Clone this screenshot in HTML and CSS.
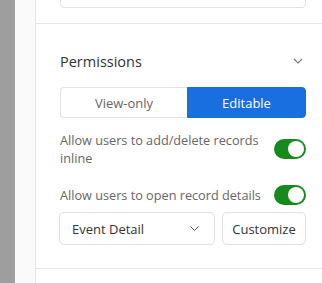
FILE: index.html
```html
<!DOCTYPE html>
<html lang="en">
<head>
    <meta charset="UTF-8">
    <title>Permissions</title>
    <link rel="stylesheet" href="styles.css">
</head>
<body>
<div class="rail"></div>
<div class="gutter"></div>
<div class="panel">
    <div class="section top">
        <div class="field"></div>
    </div>
    <div class="section perms">
        <div class="head">
            <h2>Permissions</h2>
            <svg class="chev" width="10" height="6" viewBox="0 0 10 6"><path d="M1 1l4 4 4-4" fill="none" stroke="#777" stroke-width="1.1"/></svg>
        </div>
        <div class="segment">
            <button type="button" class="seg">View-only</button>
            <button type="button" class="seg active">Editable</button>
        </div>
        <div class="option">
            <span>Allow users to add/delete records inline</span>
            <span class="toggle"></span>
        </div>
        <div class="option">
            <span class="nowrap">Allow users to open record details</span>
            <span class="toggle"></span>
        </div>
        <div class="actions">
            <button type="button" class="select">Event Detail
                <svg width="9" height="5" viewBox="0 0 9 5"><path d="M0.5 0.5l4 4 4-4" fill="none" stroke="#555" stroke-width="1"/></svg>
            </button>
            <button type="button" class="btn">Customize</button>
        </div>
    </div>
</div>
</body>
</html>
```

FILE: styles.css
```css
body {
    margin: 0;
    display: flex;
    height: 283px;
    overflow: hidden;
    font-family: "Open Sans", sans-serif;
    background-color: #fff;
}

.rail {
    width: 15px;
    background-color: #9e9e9e;
}

.gutter {
    width: 20px;
    background-color: #fafafa;
    border-right: 1px solid #e6e6e6;
}

.panel {
    flex: 1;
    display: flex;
    flex-direction: column;
}

.section {
    padding: 0 16px 0 24px;
    border-bottom: 1px solid #e6e6e6;
}

.top {
    height: 23px;
}

.field {
    height: 30px;
    margin-top: -24px;
    border: 1px solid #e3e3e3;
    border-radius: 4px;
}

.perms {
    padding-top: 25px;
    padding-bottom: 23px;
}

.head {
    display: flex;
    justify-content: space-between;
    align-items: center;
    height: 24px;
}

h2 {
    margin: 0;
    font-size: 14.5px;
    font-weight: normal;
    color: #333;
}

.chev {
    margin-right: 3px;
}

.segment {
    display: flex;
    margin-top: 14px;
    height: 31px;
}

.seg {
    flex: 1;
    border: 1px solid #e3e3e3;
    background-color: #fff;
    color: #666;
    font-family: inherit;
    font-size: 13px;
    padding: 0;
}

.seg:first-child {
    flex: none;
    width: 127px;
    border-radius: 4px 0 0 4px;
    border-right: none;
}

.seg.active {
    background-color: #1a6fe0;
    border-color: #1a6fe0;
    color: #fff;
    border-radius: 0 4px 4px 0;
}

.option {
    display: flex;
    justify-content: space-between;
    align-items: center;
    gap: 8px;
    margin-top: 13px;
    font-size: 12.7px;
    line-height: 18px;
    color: #666;
}

.option + .option {
    margin-top: 18px;
}

.nowrap {
    white-space: nowrap;
}

.toggle {
    flex: none;
    position: relative;
    width: 32px;
    height: 20px;
    border-radius: 10px;
    background-color: #168a1c;
}

.toggle::after {
    content: "";
    position: absolute;
    top: 2px;
    right: 2px;
    width: 16px;
    height: 16px;
    border-radius: 50%;
    background-color: #fff;
}

.actions {
    display: flex;
    gap: 7px;
    margin-top: 7px;
    margin-left: -1px;
}

.actions button {
    height: 33px;
    border: 1px solid #e0e0e0;
    border-radius: 5px;
    background-color: #fff;
    color: #333;
    font-family: inherit;
    font-size: 13px;
}

.select {
    width: 156px;
    display: flex;
    justify-content: space-between;
    align-items: center;
    padding: 0 15px 0 12px;
}

.btn {
    flex: 1;
    padding: 0;
}
```
